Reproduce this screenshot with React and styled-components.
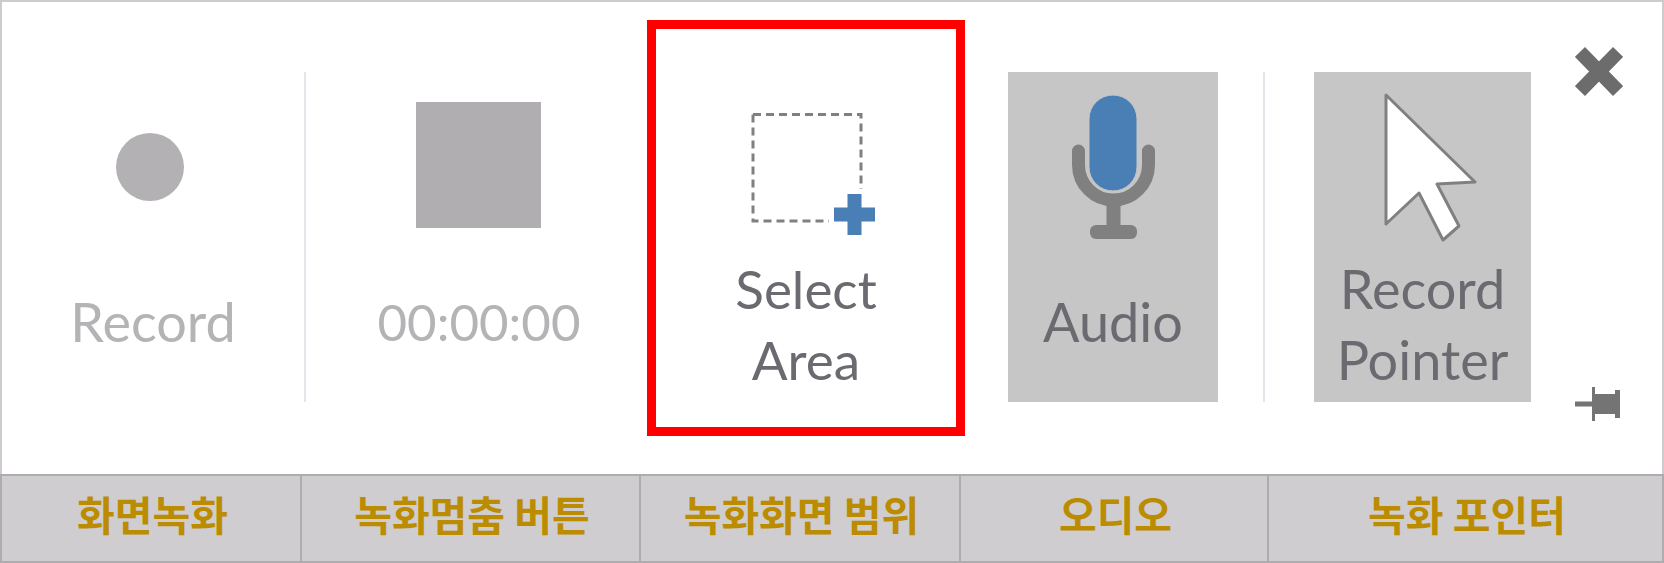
import React from "react";
import styled, { createGlobalStyle } from "styled-components";

const Global = createGlobalStyle`
  html, body { margin: 0; padding: 0; background: #fff; }
  #root { width: 1664px; height: 563px; }
`;

const Frame = styled.div`
  box-sizing: border-box;
  width: 1664px;
  height: 563px;
  border: 2px solid #cdcbcd;
  border-bottom: none;
  display: flex;
  flex-direction: column;
  background: #fff;
  font-family: Lato, "Liberation Sans", sans-serif;
`;

const Ribbon = styled.div`
  height: 472px;
  flex: none;
  display: flex;
`;

const Tools = styled.div`
  display: flex;
  align-items: flex-start;
  padding-top: 70px;
`;

const Tool = styled.div`
  position: relative;
  flex: none;
  box-sizing: border-box;
  width: ${(p) => p.$width}px;
  margin-left: ${(p) => p.$gap || 0}px;
  height: 330px;
  display: flex;
  flex-direction: column;
  background: ${(p) => (p.$active ? "#c6c6c6" : "transparent")};
`;

const IconArea = styled.div`
  box-sizing: border-box;
  height: 181px;
  flex: none;
  padding-top: ${(p) => p.$top}px;
  display: flex;
  justify-content: center;
  align-items: flex-start;
`;

const Label = styled.div`
  flex: 1;
  display: flex;
  align-items: center;
  justify-content: center;
  text-align: center;
  font-size: ${(p) => p.$size || 54}px;
  line-height: 71px;
  color: ${(p) => (p.$disabled ? "#b4b3b6" : "#6a6a70")};
  padding-bottom: ${(p) => (p.$single ? 12 : 7)}px;
  filter: blur(0.6px);
`;

const Divider = styled.div`
  flex: none;
  width: 2px;
  height: 330px;
  margin-left: ${(p) => p.$gap || 0}px;
  background: #e4e5ea;
`;

const Highlight = styled.div`
  position: absolute;
  left: -5px;
  right: -5px;
  top: -52px;
  bottom: -34px;
  border: 9px solid #ff0000;
  pointer-events: none;
`;

const Controls = styled.div`
  flex: none;
  width: 48px;
  margin-left: 44px;
  padding-top: 45px;
  height: 374px;
  display: flex;
  flex-direction: column;
  justify-content: space-between;
  align-items: flex-start;
`;

const RecordDot = styled.div`
  width: 68px;
  height: 68px;
  margin-right: 6px;
  border-radius: 50%;
  background: #b3b1b4;
`;

const StopSquare = styled.div`
  width: 125px;
  height: 126px;
  margin-right: 1px;
  background: #b0aeb0;
`;

const Captions = styled.div`
  flex: 1;
  margin: 0 -2px;
  display: flex;
  background: #cfcdcf;
  border: 2px solid #aeacae;
`;

const Caption = styled.div`
  flex: none;
  box-sizing: border-box;
  width: ${(p) => p.$width}px;
  display: flex;
  align-items: center;
  justify-content: center;
  padding: 0 0 11px 3px;
  border-right: ${(p) => (p.$last ? "none" : "2px solid #aeacae")};
  font-family: "Noto Sans CJK KR", "Noto Sans", sans-serif;
  font-weight: 700;
  font-size: 41px;
  color: #bb8c00;
  white-space: pre;
`;

const SelectIcon = () => (
  <svg width="138" height="122" viewBox="0 0 138 122">
    <path d="M16 1.500H124V76M16 1.500V108H92" fill="none" stroke="#808080" strokeWidth="3" strokeDasharray="8 5" />
    <path d="M110.500 81H124.500V94.500H138V108.500H124.500V122H110.500V108.500H97V94.500H110.500Z" fill="#4a7fb5" />
  </svg>
);

const MicIcon = () => (
  <svg width="83" height="144" viewBox="0 0 83 144">
    <path d="M6.500 56V70A35 35 0 0 0 76.500 70V56" fill="none" stroke="#808080" strokeWidth="13" strokeLinecap="round" />
    <rect x="34.500" y="105" width="14" height="30" fill="#808080" />
    <rect x="18" y="130" width="47" height="14" rx="6" fill="#808080" />
    <rect x="17" y="0" width="48" height="96" rx="24" fill="#4a7fb5" stroke="#c6c6c6" strokeWidth="1" />
  </svg>
);

const PointerIcon = () => (
  <svg width="109" height="150" viewBox="0 0 109 150">
    <path d="M18 2L107 89L69 91L91 133L75 147L51 100L18 131Z" fill="#fff" stroke="#808080" strokeWidth="3" strokeLinejoin="round" />
  </svg>
);

const CloseIcon = () => (
  <svg width="48" height="49" viewBox="0 0 48 49">
    <path d="M5 5L43 44M43 5L5 44" fill="none" stroke="#6c6c6c" strokeWidth="14" />
  </svg>
);

const PinIcon = () => (
  <svg width="45" height="34" viewBox="0 0 45 34">
    <path d="M0 14.500H17V0H20V7H40V3H45V31H40V27H20V34H17V19.500H0Z" fill="#747474" />
  </svg>
);

const captions = [
  ["화면녹화", 300],
  ["녹화멈춤 버튼", 339],
  ["녹화화면 범위", 320],
  ["오디오", 308],
  ["녹화 포인터", 393],
];

export default function App() {
  return (
    <Frame>
      <Global />
      <Ribbon>
        <Tools>
          <Tool $width={302}>
            <IconArea $top={61}><RecordDot /></IconArea>
            <Label $disabled $single>Record</Label>
          </Tool>
          <Divider />
          <Tool $width={346}>
            <IconArea $top={30}><StopSquare /></IconArea>
            <Label $disabled $single $size={51}>00:00:00</Label>
          </Tool>
          <Tool $width={308}>
            <IconArea $top={41}><SelectIcon /></IconArea>
            <Label $size={53}>Select<br />Area</Label>
            <Highlight />
          </Tool>
          <Tool $width={210} $gap={48} $active>
            <IconArea $top={23}><MicIcon /></IconArea>
            <Label $single>Audio</Label>
          </Tool>
          <Divider $gap={45} />
          <Tool $width={217} $gap={49} $active>
            <IconArea $top={21}><PointerIcon /></IconArea>
            <Label>Record<br />Pointer</Label>
          </Tool>
        </Tools>
        <Controls>
          <CloseIcon />
          <PinIcon />
        </Controls>
      </Ribbon>
      <Captions>
        {captions.map(([text, width], i) => (
          <Caption key={text} $width={width} $last={i === captions.length - 1}>{text}</Caption>
        ))}
      </Captions>
    </Frame>
  );
}
